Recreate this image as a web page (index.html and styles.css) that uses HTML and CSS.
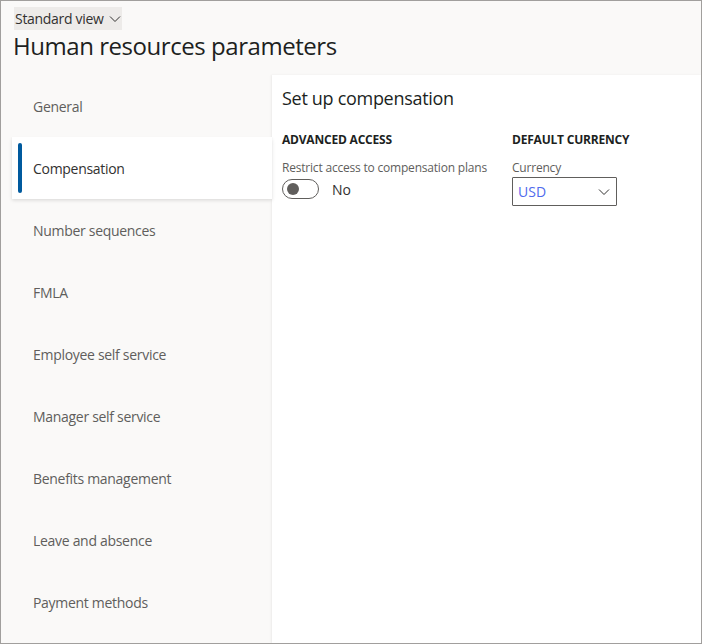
FILE: index.html
```html
<!DOCTYPE html>
<html lang="en">
<head>
<meta charset="utf-8">
<title>Human resources parameters</title>
<link rel="stylesheet" href="styles.css">
</head>
<body>
<div class="frame">
  <header class="header">
    <button class="view-btn">Standard view
      <svg class="chev-sm" width="12" height="8" viewBox="0 0 12 8"><path d="M1 1.5 L6 6.5 L11 1.5" fill="none" stroke="#323130" stroke-width="1"/></svg>
    </button>
    <h1 class="title">Human resources parameters</h1>
  </header>
  <div class="body">
    <nav class="nav">
      <div class="nav-item">General</div>
      <div class="nav-item active"><span class="bar"></span>Compensation</div>
      <div class="nav-item">Number sequences</div>
      <div class="nav-item">FMLA</div>
      <div class="nav-item">Employee self service</div>
      <div class="nav-item">Manager self service</div>
      <div class="nav-item">Benefits management</div>
      <div class="nav-item">Leave and absence</div>
      <div class="nav-item">Payment methods</div>
    </nav>
    <main class="panel">
      <h2 class="panel-title">Set up compensation</h2>
      <div class="groups">
        <section class="group">
          <h3 class="group-title">ADVANCED ACCESS</h3>
          <div class="field-label">Restrict access to compensation plans</div>
          <div class="toggle-row">
            <span class="toggle"><span class="knob"></span></span>
            <span class="toggle-text">No</span>
          </div>
        </section>
        <section class="group">
          <h3 class="group-title">DEFAULT CURRENCY</h3>
          <div class="field-label">Currency</div>
          <div class="select">
            <span class="select-value">USD</span>
            <svg width="12" height="8" viewBox="0 0 12 8"><path d="M1 1.5 L6 6.5 L11 1.5" fill="none" stroke="#323130" stroke-width="1"/></svg>
          </div>
        </section>
      </div>
    </main>
  </div>
</div>
</body>
</html>
```
FILE: styles.css
```css
* { box-sizing: border-box; }
html, body { margin: 0; padding: 0; }
body {
  font-family: "Segoe UI", "Open Sans", "Noto Sans", sans-serif;
  color: #323130;
}
.frame {
  width: 702px;
  height: 644px;
  border: 1px solid #a19f9d;
  background: #faf9f8;
  display: flex;
  flex-direction: column;
  overflow: hidden;
}
.header {
  height: 74px;
  padding: 6px 0 0 13px;
  display: flex;
  flex-direction: column;
  align-items: flex-start;
  flex-shrink: 0;
}
.view-btn {
  font: inherit;
  font-size: 14px;
  color: #323130;
  background: #edebe9;
  border: 0;
  height: 23px;
  padding: 0 1px 0 1px;
  display: flex;
  align-items: center;
  gap: 5px;
  letter-spacing: -0.3px;
}
.title {
  margin: 0 0 0 -1px;
  font-size: 24px;
  font-weight: 400;
  line-height: 32px;
  letter-spacing: -0.45px;
  color: #201f1e;
}
.body {
  flex: 1;
  display: flex;
  min-height: 0;
}
.nav {
  width: 271px;
  flex-shrink: 0;
  padding-left: 11px;
  display: flex;
  flex-direction: column;
}
.nav-item {
  height: 62px;
  flex-shrink: 0;
  display: flex;
  align-items: center;
  padding-left: 21px;
  font-size: 14px;
  color: #605e5c;
  position: relative;
  letter-spacing: -0.3px;
}
.nav-item.active {
  background: #fff;
  color: #323130;
  box-shadow: 0 1.6px 3.6px rgba(0,0,0,0.13), 0 0.3px 0.9px rgba(0,0,0,0.1);
}
.bar {
  position: absolute;
  left: 6px;
  top: 6px;
  bottom: 6px;
  width: 4px;
  border-radius: 2px;
  background: #005a9e;
}
.panel {
  flex: 1;
  min-width: 0;
  background: #fff;
  padding: 11px 0 0 10px;
  box-shadow: -1px 0 2px rgba(0,0,0,0.06);
}
.panel-title {
  margin: 0;
  font-size: 18px;
  font-weight: 500;
  line-height: 24px;
  letter-spacing: -0.3px;
  color: #201f1e;
}
.groups {
  display: flex;
  margin-top: 22px;
}
.group {
  width: 230px;
  flex-shrink: 0;
}
.group-title {
  margin: 0;
  font-size: 12px;
  font-weight: 700;
  line-height: 16px;
  color: #201f1e;
  letter-spacing: -0.2px;
}
.field-label {
  margin-top: 12px;
  font-size: 12px;
  line-height: 16px;
  color: #605e5c;
  letter-spacing: -0.2px;
}
.toggle-row {
  display: flex;
  align-items: center;
  margin-top: 3px;
  gap: 13px;
}
.toggle {
  width: 37px;
  height: 20px;
  border: 1px solid #605e5c;
  border-radius: 10px;
  display: flex;
  align-items: center;
  padding-left: 4px;
}
.knob {
  width: 12px;
  height: 12px;
  border-radius: 50%;
  background: #605e5c;
}
.toggle-text {
  font-size: 14px;
  color: #323130;
}
.select {
  margin-top: 1px;
  width: 105px;
  height: 29px;
  border: 1px solid #605e5c;
  border-radius: 1px;
  display: flex;
  align-items: center;
  justify-content: space-between;
  padding: 0 6px 0 5px;
}
.select-value {
  font-size: 14px;
  color: #4f6bed;
}
```
